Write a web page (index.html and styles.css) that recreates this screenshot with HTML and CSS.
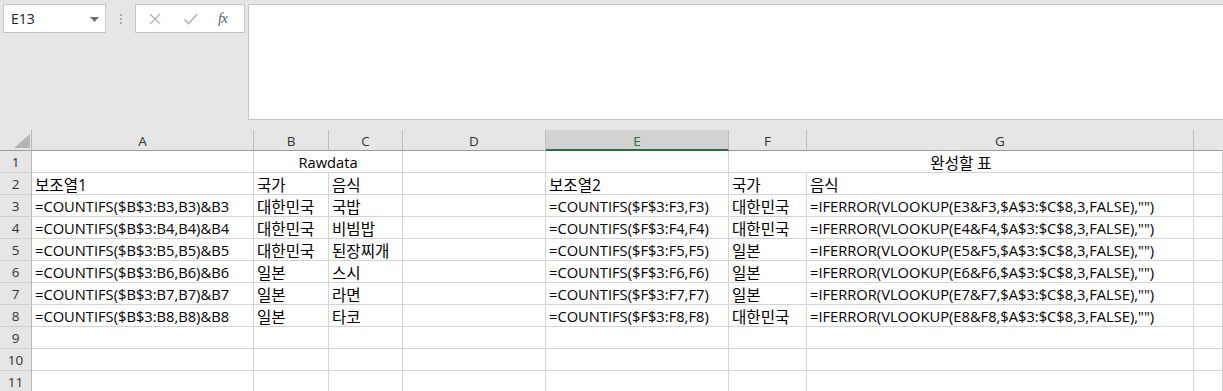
FILE: index.html
```html
<!DOCTYPE html>
<html lang="ko">
<head>
<meta charset="utf-8">
<title>Excel</title>
<link rel="stylesheet" href="styles.css">
</head>
<body>
<div class="topbar">
  <div class="namebox">
    <span class="name">E13</span>
    <svg class="dd" width="9" height="5" viewBox="0 0 9 5"><polygon points="0,0 9,0 4.5,5" fill="#6d6d6d"/></svg>
  </div>
  <div class="dots"><i></i><i></i><i></i></div>
  <div class="fxbox">
    <svg class="btn" width="14" height="14" viewBox="0 0 14 14"><path d="M2 2 L12 12 M12 2 L2 12" stroke="#b3b3b3" stroke-width="1.3" fill="none"/></svg>
    <svg class="btn" width="16" height="14" viewBox="0 0 16 14"><path d="M1.5 7.5 L5.5 11.5 L14.5 2" stroke="#b3b3b3" stroke-width="1.6" fill="none"/></svg>
    <span class="fx">fx</span>
  </div>
  <div class="formula"></div>
</div>
<div class="sheet">
  <div class="corner"><svg width="16" height="14" viewBox="0 0 16 14"><polygon points="16,0 16,14 0,14" fill="#b5b5b5"/></svg></div>
  <div class="ch">A</div><div class="ch">B</div><div class="ch">C</div><div class="ch">D</div><div class="ch sel">E</div><div class="ch">F</div><div class="ch">G</div><div class="ch last"></div>

  <div class="rh">1</div><div class="c"></div><div class="c span2 center">Rawdata</div><div class="c"></div><div class="c"></div><div class="c span2 center ko">완성할 표</div><div class="c"></div>
  <div class="rh">2</div><div class="c ko">보조열1</div><div class="c ko">국가</div><div class="c ko">음식</div><div class="c"></div><div class="c ko">보조열2</div><div class="c ko">국가</div><div class="c ko">음식</div><div class="c"></div>
  <div class="rh">3</div><div class="c">=COUNTIFS($B$3:B3,B3)&amp;B3</div><div class="c ko">대한민국</div><div class="c ko">국밥</div><div class="c"></div><div class="c">=COUNTIFS($F$3:F3,F3)</div><div class="c ko">대한민국</div><div class="c">=IFERROR(VLOOKUP(E3&amp;F3,$A$3:$C$8,3,FALSE),"")</div><div class="c"></div>
  <div class="rh">4</div><div class="c">=COUNTIFS($B$3:B4,B4)&amp;B4</div><div class="c ko">대한민국</div><div class="c ko">비빔밥</div><div class="c"></div><div class="c">=COUNTIFS($F$3:F4,F4)</div><div class="c ko">대한민국</div><div class="c">=IFERROR(VLOOKUP(E4&amp;F4,$A$3:$C$8,3,FALSE),"")</div><div class="c"></div>
  <div class="rh">5</div><div class="c">=COUNTIFS($B$3:B5,B5)&amp;B5</div><div class="c ko">대한민국</div><div class="c ko">된장찌개</div><div class="c"></div><div class="c">=COUNTIFS($F$3:F5,F5)</div><div class="c ko">일본</div><div class="c">=IFERROR(VLOOKUP(E5&amp;F5,$A$3:$C$8,3,FALSE),"")</div><div class="c"></div>
  <div class="rh">6</div><div class="c">=COUNTIFS($B$3:B6,B6)&amp;B6</div><div class="c ko">일본</div><div class="c ko">스시</div><div class="c"></div><div class="c">=COUNTIFS($F$3:F6,F6)</div><div class="c ko">일본</div><div class="c">=IFERROR(VLOOKUP(E6&amp;F6,$A$3:$C$8,3,FALSE),"")</div><div class="c"></div>
  <div class="rh">7</div><div class="c">=COUNTIFS($B$3:B7,B7)&amp;B7</div><div class="c ko">일본</div><div class="c ko">라면</div><div class="c"></div><div class="c">=COUNTIFS($F$3:F7,F7)</div><div class="c ko">일본</div><div class="c">=IFERROR(VLOOKUP(E7&amp;F7,$A$3:$C$8,3,FALSE),"")</div><div class="c"></div>
  <div class="rh">8</div><div class="c">=COUNTIFS($B$3:B8,B8)&amp;B8</div><div class="c ko">일본</div><div class="c ko">타코</div><div class="c"></div><div class="c">=COUNTIFS($F$3:F8,F8)</div><div class="c ko">대한민국</div><div class="c">=IFERROR(VLOOKUP(E8&amp;F8,$A$3:$C$8,3,FALSE),"")</div><div class="c"></div>
  <div class="rh">9</div><div class="c"></div><div class="c"></div><div class="c"></div><div class="c"></div><div class="c"></div><div class="c"></div><div class="c"></div><div class="c"></div>
  <div class="rh">10</div><div class="c"></div><div class="c"></div><div class="c"></div><div class="c"></div><div class="c"></div><div class="c"></div><div class="c"></div><div class="c"></div>
  <div class="rh">11</div><div class="c"></div><div class="c"></div><div class="c"></div><div class="c"></div><div class="c"></div><div class="c"></div><div class="c"></div><div class="c"></div>
</div>
</body>
</html>
```

FILE: styles.css
```css
* { box-sizing: border-box; }
html, body { margin: 0; padding: 0; }
body {
  width: 1223px;
  height: 391px;
  overflow: hidden;
  background: #e6e6e6;
  font-family: "Open Sans", "Noto Sans CJK KR", sans-serif;
  color: #000;
}
.topbar {
  height: 130px;
  display: flex;
  align-items: flex-start;
  padding-top: 4px;
}
.namebox {
  margin-left: 3px;
  width: 103px;
  height: 29px;
  background: #fff;
  border: 1px solid #c6c6c6;
  display: flex;
  align-items: center;
  justify-content: space-between;
  padding: 0 6px 0 7px;
}
.name { font-size: 14px; color: #222; }
.dd { margin-top: 1px; }
.dots {
  width: 29px;
  height: 29px;
  display: flex;
  flex-direction: column;
  align-items: center;
  justify-content: center;
  gap: 2px;
}
.dots i {
  display: block;
  width: 2px;
  height: 2px;
  background: #a8a8a8;
}
.fxbox {
  width: 110px;
  height: 29px;
  background: #fff;
  border: 1px solid #c6c6c6;
  display: flex;
  align-items: center;
  padding-left: 12px;
  gap: 21px;
}
.fx {
  font-family: "Liberation Serif", serif;
  font-style: italic;
  font-size: 15px;
  color: #5f5f5f;
  margin-left: -2px;
  letter-spacing: -1px;
}
.formula {
  margin-left: 3px;
  flex: 1;
  height: 116px;
  background: #fff;
  border: 1px solid #c6c6c6;
  border-right: none;
}
.sheet {
  display: grid;
  grid-template-columns: 32px 222px 75px 74px 143px 183px 78px 387px 1fr;
  grid-template-rows: 21px repeat(11, 22px);
  background: #fff;
}
.corner {
  background: #e6e6e6;
  border-right: 1px solid #b7b7b7;
  border-bottom: 1px solid #9c9c9c;
  display: flex;
  align-items: flex-end;
  justify-content: flex-end;
  padding: 0 1px 2px 0;
}
.ch {
  background: #e6e6e6;
  border-right: 1px solid #bdbdbd;
  border-bottom: 1px solid #9c9c9c;
  font-size: 13.5px;
  color: #333;
  display: flex;
  align-items: center;
  justify-content: center;
  padding-top: 1px;
}
.ch.sel {
  background: #d2d2d2;
  color: #217346;
  border-bottom: 2px solid #217346;
  padding-top: 2px;
}
.ch.last { border-right: none; }
.rh {
  background: #e6e6e6;
  border-right: 1px solid #b7b7b7;
  border-bottom: 1px solid #d0d0d0;
  font-size: 13.5px;
  color: #333;
  display: flex;
  align-items: center;
  justify-content: center;
  padding-top: 1px;
}
.c {
  border-right: 1px solid #d4d4d4;
  border-bottom: 1px solid #d4d4d4;
  font-size: 14.7px;
  white-space: nowrap;
  display: flex;
  align-items: center;
  padding: 1px 0 0 3px;
  overflow: visible;
}
.c.ko { font-size: 15.6px; }
.span2 { grid-column: span 2; }
.center { justify-content: center; padding-left: 0; }
```
